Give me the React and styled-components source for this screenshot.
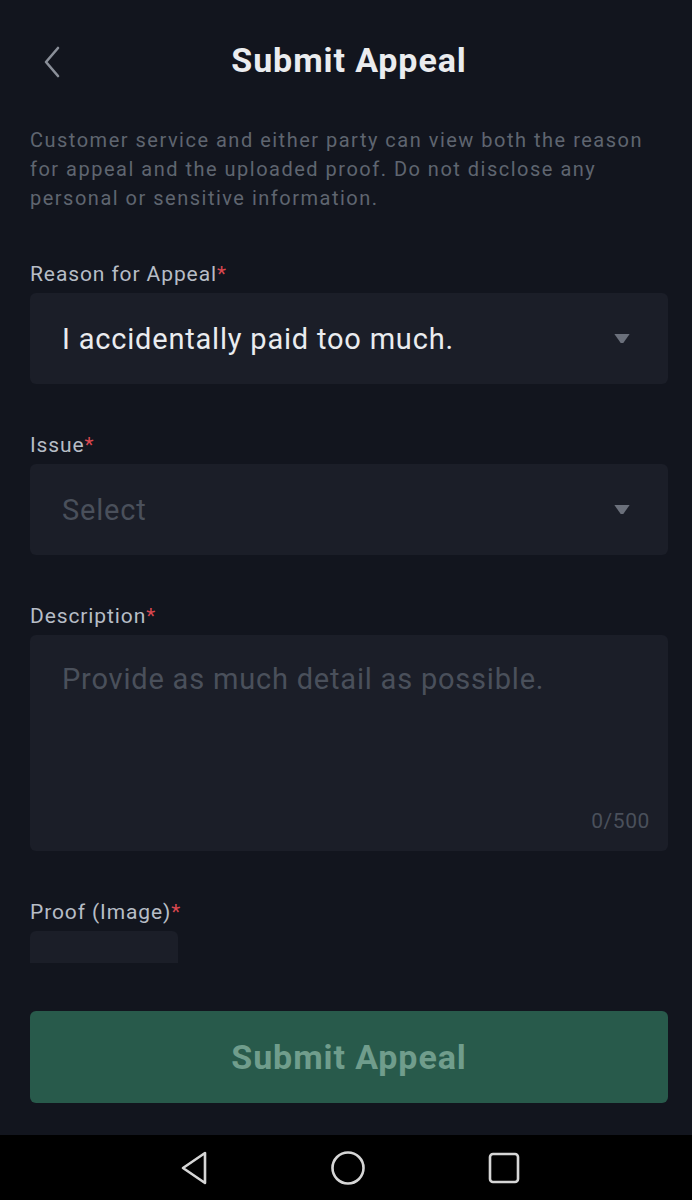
import React from 'react'
import styled, { createGlobalStyle } from 'styled-components'

const GlobalStyle = createGlobalStyle`
  html, body {
    margin: 0;
    padding: 0;
    background: #12151e;
  }
  * {
    box-sizing: border-box;
  }
`

export default function App() {
  return (
    <>
      <GlobalStyle />
      <Page>
        <Header>
          <BackButton aria-label="Back">
            <svg width="20" height="32" viewBox="0 0 20 32" fill="none">
              <path d="M16 2 L4 16 L16 30" stroke="#8a8f99" strokeWidth="2.6" strokeLinecap="round" strokeLinejoin="round" />
            </svg>
          </BackButton>
          <Title>Submit Appeal</Title>
        </Header>

        <Scroll>
          <Notice>
            Customer service and either party can view both the reason
            for appeal and the uploaded proof. Do not disclose any
            personal or sensitive information.
          </Notice>

          <Group>
            <Label>Reason for Appeal<Star>*</Star></Label>
            <SelectBox>
              <FieldText>I accidentally paid too much.</FieldText>
              <Caret />
            </SelectBox>
          </Group>

          <Group>
            <Label>Issue<Star>*</Star></Label>
            <SelectBox>
              <FieldText placeholder>Select</FieldText>
              <Caret />
            </SelectBox>
          </Group>

          <Group>
            <Label>Description<Star>*</Star></Label>
            <TextArea>
              <FieldText placeholder>Provide as much detail as possible.</FieldText>
              <Counter>0/500</Counter>
            </TextArea>
          </Group>

          <Group>
            <Label>Proof (Image)<Star>*</Star></Label>
            <UploadBox />
          </Group>
        </Scroll>

        <Footer>
          <SubmitButton disabled>Submit Appeal</SubmitButton>
        </Footer>

        <NavBar>
          <svg width="30" height="36" viewBox="0 0 30 36" fill="none">
            <path d="M26 3 L26 33 L4 18 Z" stroke="#d6d6d6" strokeWidth="2.6" strokeLinejoin="round" />
          </svg>
          <svg width="36" height="36" viewBox="0 0 36 36" fill="none">
            <circle cx="18" cy="18" r="15.5" stroke="#d6d6d6" strokeWidth="2.6" />
          </svg>
          <svg width="34" height="34" viewBox="0 0 34 34" fill="none">
            <rect x="3" y="3" width="28" height="28" rx="3" stroke="#d6d6d6" strokeWidth="2.6" />
          </svg>
        </NavBar>
      </Page>
    </>
  )
}

const font = `'Roboto', 'Noto Sans', 'Liberation Sans', sans-serif`

const Page = styled.div`
  display: flex;
  flex-direction: column;
  height: 1200px;
  background: #12151e;
  font-family: ${font};
`

const Header = styled.header`
  position: relative;
  display: flex;
  align-items: center;
  justify-content: center;
  height: 120px;
  padding-left: 6px;
  flex: none;
`

const BackButton = styled.button`
  position: absolute;
  left: 42px;
  top: 46px;
  display: flex;
  padding: 0;
  border: 0;
  background: none;
`

const Title = styled.h1`
  margin: 0;
  font-size: 34px;
  font-weight: 700;
  color: #eaecef;
  letter-spacing: 0.9px;
`

const Scroll = styled.main`
  flex: 1;
  overflow: hidden;
  padding: 6px 24px 0 30px;
`

const Notice = styled.p`
  margin: 0;
  font-size: 20px;
  line-height: 29px;
  letter-spacing: 1.5px;
  color: #5f6570;
`

const Group = styled.section`
  display: flex;
  flex-direction: column;
  margin-top: 47px;
`

const Label = styled.div`
  font-size: 21px;
  line-height: 28px;
  letter-spacing: 0.9px;
  color: #b7bdc6;
  margin-bottom: 5px;
`

const Star = styled.span`
  color: #d9474f;
`

const SelectBox = styled.div`
  display: flex;
  align-items: center;
  justify-content: space-between;
  height: 91px;
  padding: 0 38px 0 32px;
  border-radius: 6px;
  background: #1b1e28;
`

const FieldText = styled.span`
  font-size: 29px;
  line-height: 36px;
  letter-spacing: 0.8px;
  color: ${p => (p.placeholder ? '#4a505b' : '#eaecef')};
`

const Caret = styled.span`
  width: 16px;
  height: 10px;
  background: #6b707b;
  clip-path: polygon(0 0, 100% 0, 58% 95%, 42% 95%);
  border-radius: 0 0 3px 3px;
`

const TextArea = styled.div`
  position: relative;
  height: 216px;
  padding: 26px 32px;
  border-radius: 6px;
  background: #1b1e28;
`

const Counter = styled.span`
  position: absolute;
  right: 18px;
  bottom: 16px;
  font-size: 21px;
  line-height: 28px;
  letter-spacing: 0.6px;
  color: #4a505b;
`

const UploadBox = styled.div`
  width: 148px;
  height: 148px;
  border-radius: 6px;
  background: #1b1e28;
`

const Footer = styled.footer`
  flex: none;
  padding: 48px 24px 32px 30px;
`

const SubmitButton = styled.button`
  display: block;
  width: 100%;
  height: 92px;
  padding: 0;
  border: 0;
  border-radius: 6px;
  background: #285a4b;
  color: #709d8c;
  font-family: ${font};
  font-size: 34px;
  font-weight: 700;
  letter-spacing: 0.9px;
`

const NavBar = styled.nav`
  flex: none;
  display: flex;
  align-items: center;
  justify-content: center;
  gap: 121px;
  height: 65px;
  padding-left: 8px;
  background: #000;
`
